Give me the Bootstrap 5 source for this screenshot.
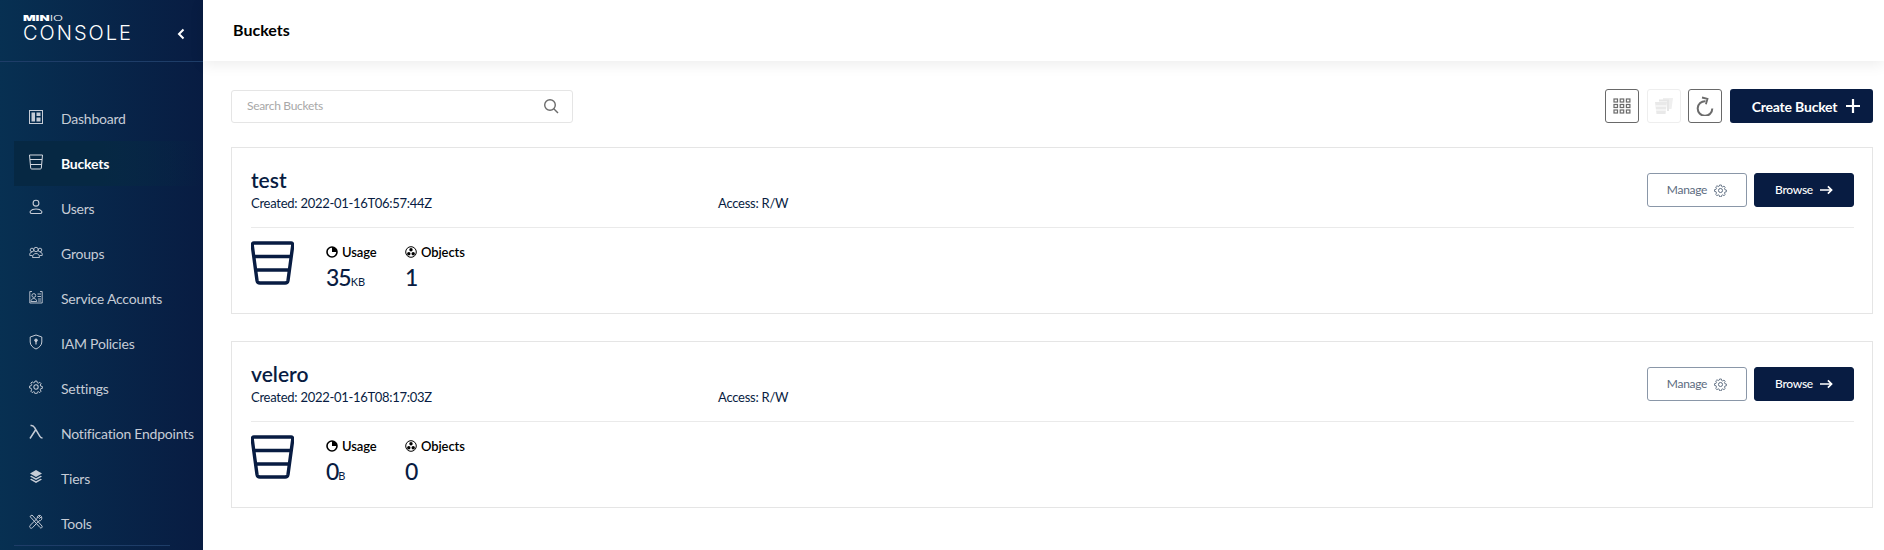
<!DOCTYPE html>
<html lang="en">
<head>
  <meta charset="UTF-8">
  <title>MinIO Console - Buckets</title>
  <meta name="viewport" content="width=device-width, initial-scale=1">
  <link href="https://cdn.jsdelivr.net/npm/bootstrap@5.3.0/dist/css/bootstrap.min.css" rel="stylesheet">
  <style>
    html, body { height: 100%; overflow: hidden; }
    body { font-family: "Lato", "Liberation Sans", sans-serif; color: #081c42; background: #fff; }
    .app-side { width: 203px; flex: 0 0 203px; height: 550px; overflow: hidden; background: linear-gradient(90deg, #073052 0%, #081c42 100%); color: #fff; }
    .side-head { height: 62px; padding: 14px 0 0 23px; border-bottom: 1px solid #1e3d68; position: relative; }
    .logo-top { font-family: "Inter", sans-serif; font-size: 8px; line-height: 8px; font-weight: 900; height: 9px; transform: scaleX(1.65); transform-origin: left center; }
    .logo-top span { font-weight: 300; }
    .logo-main { font-family: "Inter", "Lato", sans-serif; font-size: 20px; line-height: 20px; font-weight: 300; letter-spacing: 2px; }
    .side-toggle { position: absolute; left: 175px; top: 27px; }
    .side-nav { padding-top: 34px; }
    .side-item { height: 45px; margin-left: 14px; padding-left: 15px; gap: 18px; color: #c6ccd6; font-size: 14px; letter-spacing: -.22px; white-space: nowrap; }
    .side-item svg { width: 14px; height: 16px; flex: none; margin-top: -4px; }
    .side-item.on { color: #fff; font-weight: 700; background: linear-gradient(90deg, #062843 0%, #062843 45%, rgba(6, 32, 60, 0) 100%); }
    .side-rule { margin: -1px 33px 0 14px; border-top: 1px solid #1e3d68; }
    .top-bar { height: 61px; padding-left: 30px; padding-bottom: 2px; box-shadow: 0 3px 14px rgba(0, 0, 0, .08); font-size: 16px; font-weight: 700; color: #000; }
    .work-area { padding: 28px 11px 0 28px; }
    .find-box { width: 342px; height: 33px; border: 1px solid #e5e5e5; border-radius: 3px; padding: 0 13px 0 15px; font-size: 12px; letter-spacing: -.3px; color: #a8a8a8; }
    .tool-btn { width: 34px; height: 34px; padding: 0; border: 1px solid #696969; border-radius: 3px; background: #fff; }
    .tool-btn.off { border-color: #eee; }
    .tool-btn.spin { margin-left: -1px; }
    .new-btn { width: 143px; height: 34px; padding: 0 0 0 9px; gap: 9px; background: #081c42; color: #fff; border: 0; border-radius: 3px; font-size: 14px; letter-spacing: -.2px; font-weight: 700; }
    .bucket-box { height: 167px; border: 1px solid #e5e5e5; margin-bottom: 27px; padding: 19px 18px 0 19px; }
    .bucket-head { height: 61px; border-bottom: 1px solid #eaeaea; }
    .bucket-name { font-size: 21px; line-height: 25px; font-weight: 600; color: #081c42; margin: 0 0 3px; }
    .bucket-meta { font-size: 13px; line-height: 16px; letter-spacing: -.25px; width: 467px; }
    .bucket-meta span { letter-spacing: -.3px; }
    .row-btn { width: 100px; height: 34px; padding: 0; gap: 7px; border-radius: 3px; font-size: 12px; letter-spacing: -.3px; }
    .row-btn.plain { background: #fff; border: 1px solid #8a97a8; color: #5c6b80; }
    .row-btn.solid { background: #081c42; border: 1px solid #081c42; color: #fff; font-weight: 500; }
    .head-btns { margin-top: 6px; gap: 7px; }
    .bucket-body { padding-top: 13px; }
    .stat-icon { width: 43px; height: 44px; margin-right: 32px; }
    .stat-one { width: 79px; }
    .stat-label { font-size: 13px; line-height: 16px; font-weight: 600; color: #000; gap: 4px; margin-top: 3px; letter-spacing: -.1px; }
    .stat-num { font-size: 23px; line-height: 28px; font-weight: 500; letter-spacing: -1px; color: #081c42; margin-top: 3px; }
    .stat-num span { font-size: 11px; letter-spacing: 0; font-weight: 400; }
  </style>
</head>
<body>
  <svg width="0" height="0" class="d-block">
    <symbol id="ico-bucket" viewBox="0 0 43 44">
      <path d="M3 2h37a1.800 1.800 0 0 1 1.800 2.100L37 39.500a3 3 0 0 1-3 2.500H9a3 3 0 0 1-3-2.500L1.200 4.100A1.800 1.800 0 0 1 3 2zM3 15.500h37M5 29h33" fill="none" stroke="#081c42" stroke-width="3.400"/>
    </symbol>
    <symbol id="ico-gear" viewBox="0 0 16 16">
      <circle cx="8" cy="8" r="2.500" fill="none" stroke="currentColor" stroke-width="1.200"/>
      <path d="M6.800 1h2.400l.4 2 1.400.6 1.700-1.100 1.700 1.700-1.100 1.700.6 1.400 2 .4v2.400l-2 .4-.6 1.400 1.100 1.700-1.700 1.700-1.700-1.100-1.400.6-.4 2H6.800l-.4-2-1.400-.6-1.700 1.100-1.700-1.700 1.100-1.700L2.100 10l-2-.4V7.200l2-.4.600-1.400-1.100-1.700 1.700-1.700 1.700 1.100 1.400-.6z" transform="translate(.6 .3) scale(.92)" fill="none" stroke="currentColor" stroke-width="1.200" stroke-linejoin="round"/>
    </symbol>
    <symbol id="ico-arrow" viewBox="0 0 14 10">
      <path d="M0 5h12.500M8.500 1l4 4-4 4" fill="none" stroke="currentColor" stroke-width="1.800"/>
    </symbol>
    <symbol id="ico-pie" viewBox="0 0 12 12">
      <circle cx="6" cy="6" r="5" fill="none" stroke="#000" stroke-width="1.600"/>
      <path d="M6 6V1a5 5 0 0 1 5 5z" fill="#000"/>
    </symbol>
    <symbol id="ico-objects" viewBox="0 0 12 12">
      <circle cx="6" cy="6" r="5.300" fill="none" stroke="#000" stroke-width="1"/>
      <circle cx="6" cy="3.800" r="1.700" fill="#000"/><circle cx="3.800" cy="7.700" r="1.700" fill="#000"/><circle cx="8.200" cy="7.700" r="1.700" fill="#000"/>
    </symbol>
  </svg>

  <div class="d-flex">
    <aside class="app-side">
      <div class="side-head">
        <div class="logo-top">MIN<span>IO</span></div>
        <div class="logo-main">CONSOLE</div>
        <svg class="side-toggle" width="12" height="14" viewBox="0 0 12 14"><path d="M8.500 2.500L4 7l4.500 4.500" fill="none" stroke="#fff" stroke-width="2"/></svg>
      </div>
      <nav class="side-nav">
        <div class="side-item d-flex align-items-center">
          <svg viewBox="0 0 14 16" fill="none" stroke="currentColor"><rect x=".5" y="1.500" width="13" height="13"/><rect x="2.500" y="3.500" width="3.500" height="9" fill="currentColor" stroke="none"/><rect x="7.500" y="3.500" width="4" height="3.500" fill="currentColor" stroke="none"/><rect x="7.500" y="8.500" width="4" height="4" fill="currentColor" stroke="none"/></svg>
          Dashboard</div>
        <div class="side-item on d-flex align-items-center">
          <svg viewBox="0 0 14 16" fill="none" stroke="#d5dae2"><path d="M.5 1h13l-1.200 13.200a1 1 0 0 1-1 .8H2.700a1 1 0 0 1-1-.8zM1 5.500h12M1.500 10.500h11"/></svg>
          Buckets</div>
        <div class="side-item d-flex align-items-center">
          <svg viewBox="0 0 14 16" fill="none" stroke="currentColor" stroke-width="1.100"><circle cx="7" cy="4.200" r="2.900"/><path d="M2.500 14.500h9a1.500 1.500 0 0 0 1-2.500c-1-1.300-3-2-5.500-2s-4.500.7-5.500 2a1.500 1.500 0 0 0 1 2.500z"/></svg>
          Users</div>
        <div class="side-item d-flex align-items-center">
          <svg viewBox="0 0 14 16" fill="none" stroke="currentColor" stroke-width=".9"><circle cx="7" cy="5.500" r="2.200"/><circle cx="3" cy="6" r="1.800"/><circle cx="11" cy="6" r="1.800"/><path d="M3.500 13.500c0-2.500 1.500-4 3.500-4s3.500 1.500 3.500 4zM3.500 11.500H.8c-.4-2 .6-3.500 2.200-3.500M10.500 11.500h2.700c.4-2-.6-3.500-2.200-3.500"/></svg>
          Groups</div>
        <div class="side-item d-flex align-items-center">
          <svg viewBox="0 0 14 16" fill="none" stroke="currentColor" stroke-width=".9"><path d="M3 2.500H.8v11.500h12.400V2.500H11"/><circle cx="4.800" cy="6.500" r="1.900"/><path d="M1.800 12.500c.3-2 1.500-3 3-3s2.700 1 3 3zM8.500 5h3.500M8.500 7.500h3.500M9 10h3M9 12h3"/></svg>
          Service Accounts</div>
        <div class="side-item d-flex align-items-center">
          <svg viewBox="0 0 14 16" fill="none" stroke="currentColor"><path d="M7 1l5.800 2v5c0 3.200-2.600 5.700-5.800 7-3.200-1.300-5.800-3.800-5.800-7V3z"/><circle cx="7" cy="6.300" r="1.300" fill="currentColor"/><path d="M7 7v3.500" stroke-width="1.200"/></svg>
          IAM Policies</div>
        <div class="side-item d-flex align-items-center">
          <svg viewBox="0 0 16 16"><use href="#ico-gear"/></svg>
          Settings</div>
        <div class="side-item d-flex align-items-center">
          <svg viewBox="0 0 14 16" fill="none" stroke="currentColor" stroke-width="1.500"><path d="M1.500 1.500c2.500-.5 3.300.5 4 2L11 12.500c.5 1 1.300 1.500 2.500 1.500M6.500 6L1 14.500"/></svg>
          Notification Endpoints</div>
        <div class="side-item d-flex align-items-center">
          <svg viewBox="0 0 14 16" fill="currentColor"><path d="M7 1l6 3.500L7 8 1 4.500z"/><path d="M7 9.300L2.400 6.700 1 7.500 7 11l6-3.500-1.400-.8zM7 12.300L2.400 9.700 1 10.500 7 14l6-3.500-1.400-.8z"/></svg>
          Tiers</div>
        <div class="side-item d-flex align-items-center">
          <svg viewBox="0 0 14 16" fill="none" stroke="currentColor" stroke-width="1"><path d="M1 2.500l2-1.500 10 11c.5 1 0 1.800-1 2-.5 0-.8-.2-1-.5z"/><path d="M12.500 2.500L10.500 4.500 9.500 3.500 11.500 1.500C9.500.8 7.800 2.300 8.300 4.300L1 11.500c-.6.800-.4 2 .5 2.500.8.500 1.500.2 2-.3L10 6.800c2 .5 3.500-1.800 2.500-4.300z"/></svg>
          Tools</div>
      </nav>
      <div class="side-rule"></div>
    </aside>

    <main class="flex-grow-1">
      <div class="top-bar d-flex align-items-center">Buckets</div>
      <div class="work-area">
        <div class="d-flex justify-content-between align-items-center mb-4">
          <div class="find-box d-flex justify-content-between align-items-center">
            <span>Search Buckets</span>
            <svg width="16" height="16" viewBox="0 0 16 16" fill="none" stroke="#6b6b6b" stroke-width="1.400"><circle cx="7" cy="7" r="5.300"/><path d="M10.800 10.800L15 15"/></svg>
          </div>
          <div class="d-flex gap-2">
            <button class="tool-btn d-flex align-items-center justify-content-center" type="button">
              <svg width="18" height="16" viewBox="0 0 18 16" fill="none" stroke="#6b6b6b" stroke-width="1.200"><rect x="1" y="1" width="3.500" height="3"/><rect x="7.200" y="1" width="3.500" height="3"/><rect x="13.400" y="1" width="3.500" height="3"/><rect x="1" y="6.500" width="3.500" height="3"/><rect x="7.200" y="6.500" width="3.500" height="3"/><rect x="13.400" y="6.500" width="3.500" height="3"/><rect x="1" y="12" width="3.500" height="3"/><rect x="7.200" y="12" width="3.500" height="3"/><rect x="13.400" y="12" width="3.500" height="3"/></svg>
            </button>
            <button class="tool-btn off d-flex align-items-center justify-content-center" type="button">
              <svg width="20" height="18" viewBox="0 0 20 18"><path d="M9 1h10l-1.500 11H15V3H9z" fill="#efefef"/><path d="M5 2.500h10V14h-2V4.500H5z" fill="#e6e6e6"/><path d="M1 5h12l-1.500 12h-9z" fill="#e9e9e9"/><path d="M1.500 9h11M2 13h10" stroke="#fff" stroke-width="1.200"/></svg>
            </button>
            <button class="tool-btn spin d-flex align-items-center justify-content-center" type="button">
              <svg width="18" height="20" viewBox="0 0 18 20" fill="none" stroke="#6b6b6b" stroke-width="2"><path d="M9.500 5.200A7.300 7.300 0 1 0 16.300 12.500"/><path d="M6 1.500l5.500 1.300-1.600 5.400" stroke-width="1.800"/></svg>
            </button>
            <button class="new-btn d-flex align-items-center justify-content-center" type="button">
              Create Bucket
              <svg width="14" height="14" viewBox="0 0 14 14"><path d="M7 0v14M0 7h14" stroke="#fff" stroke-width="2.200"/></svg>
            </button>
          </div>
        </div>

        <div class="bucket-box">
          <div class="bucket-head d-flex justify-content-between">
            <div>
              <h2 class="bucket-name">test</h2>
              <div class="d-flex">
                <div class="bucket-meta">Created: <span>2022-01-16T06:57:44Z</span></div>
                <div class="bucket-meta">Access: R/W</div>
              </div>
            </div>
            <div class="head-btns d-flex">
              <button class="row-btn plain d-flex align-items-center justify-content-center" type="button">Manage <svg width="13" height="13" viewBox="0 0 16 16"><use href="#ico-gear"/></svg></button>
              <button class="row-btn solid d-flex align-items-center justify-content-center" type="button">Browse <svg width="13" height="10" viewBox="0 0 14 10"><use href="#ico-arrow"/></svg></button>
            </div>
          </div>
          <div class="bucket-body d-flex">
            <svg class="stat-icon"><use href="#ico-bucket"/></svg>
            <div class="stat-one">
              <div class="stat-label d-flex align-items-center"><svg width="12" height="12"><use href="#ico-pie"/></svg>Usage</div>
              <div class="stat-num">35<span>KB</span></div>
            </div>
            <div>
              <div class="stat-label d-flex align-items-center"><svg width="12" height="12"><use href="#ico-objects"/></svg>Objects</div>
              <div class="stat-num">1</div>
            </div>
          </div>
        </div>

        <div class="bucket-box">
          <div class="bucket-head d-flex justify-content-between">
            <div>
              <h2 class="bucket-name">velero</h2>
              <div class="d-flex">
                <div class="bucket-meta">Created: <span>2022-01-16T08:17:03Z</span></div>
                <div class="bucket-meta">Access: R/W</div>
              </div>
            </div>
            <div class="head-btns d-flex">
              <button class="row-btn plain d-flex align-items-center justify-content-center" type="button">Manage <svg width="13" height="13" viewBox="0 0 16 16"><use href="#ico-gear"/></svg></button>
              <button class="row-btn solid d-flex align-items-center justify-content-center" type="button">Browse <svg width="13" height="10" viewBox="0 0 14 10"><use href="#ico-arrow"/></svg></button>
            </div>
          </div>
          <div class="bucket-body d-flex">
            <svg class="stat-icon"><use href="#ico-bucket"/></svg>
            <div class="stat-one">
              <div class="stat-label d-flex align-items-center"><svg width="12" height="12"><use href="#ico-pie"/></svg>Usage</div>
              <div class="stat-num">0<span>B</span></div>
            </div>
            <div>
              <div class="stat-label d-flex align-items-center"><svg width="12" height="12"><use href="#ico-objects"/></svg>Objects</div>
              <div class="stat-num">0</div>
            </div>
          </div>
        </div>
      </div>
    </main>
  </div>

  <script src="https://cdn.jsdelivr.net/npm/bootstrap@5.3.0/dist/js/bootstrap.bundle.min.js"></script>
</body>
</html>
